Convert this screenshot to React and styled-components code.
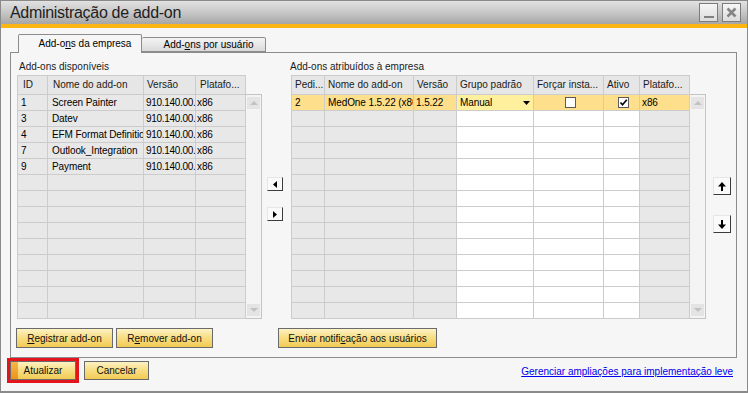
import React from 'react'
import styled, { createGlobalStyle } from 'styled-components'

const GlobalStyle = createGlobalStyle`
  html, body { margin: 0; padding: 0; background: #ffffff; }
  body {
    font-family: "Liberation Sans", Arial, sans-serif;
    font-size: 10px;
    color: #000;
  }
  * { box-sizing: border-box; }
`

const Window = styled.div`
  width: 748px;
  height: 393px;
  display: flex;
  flex-direction: column;
  background: #f6f6f6;
  border: 1px solid #8a8a8a;
  border-bottom-width: 2px;
  overflow: hidden;
`

const TitleBar = styled.div`
  height: 23px;
  flex: none;
  display: flex;
  align-items: center;
  padding: 0 6px 0 9px;
  background: linear-gradient(#e2e2e2, #c4c4c4 55%, #a6a6a6);
`

const Title = styled.div`
  flex: 1;
  font-size: 16px;
  letter-spacing: -0.3px;
  color: #1e1e1e;
  padding-top: 1px;
`

const WinButton = styled.div`
  width: 19px;
  height: 19px;
  margin-left: 4px;
  border: 1px solid #7c7c7c;
  background: linear-gradient(#f6f6f6, #dcdcdc);
  display: flex;
  align-items: ${(p) => (p.$bottom ? 'flex-end' : 'center')};
  justify-content: center;
  padding-bottom: ${(p) => (p.$bottom ? '3px' : '0')};
`

const MinBar = styled.div`
  width: 10px;
  height: 2px;
  background: #808080;
`

const Accent = styled.div`
  height: 4px;
  flex: none;
  background: #fbb614;
`

const Content = styled.div`
  padding: 6px 10px 0 9px;
  flex: none;
`

const TabRow = styled.div`
  height: 18px;
  display: flex;
  align-items: flex-end;
  padding-left: 8px;
`

const Tab = styled.div`
  width: 124px;
  height: ${(p) => (p.$active ? '19px' : '15px')};
  margin-bottom: ${(p) => (p.$active ? '-1px' : '0')};
  position: relative;
  z-index: ${(p) => (p.$active ? 1 : 0)};
  border: 1px solid #8c8c8c;
  border-bottom: ${(p) => (p.$active ? 'none' : '1px solid #8c8c8c')};
  border-left: ${(p) => (p.$active ? '1px solid #8c8c8c' : 'none')};
  border-radius: 2px 2px 0 0;
  background: ${(p) => (p.$active ? '#f6f6f6' : 'linear-gradient(#f4f4f4, #dadada)')};
  display: flex;
  align-items: center;
  justify-content: center;
  padding: 0 0 ${(p) => (p.$active ? '1px' : '0')} 10px;
`

const Panel = styled.div`
  height: 306px;
  border: 1px solid #8c8c8c;
  display: flex;
  flex-direction: column;
  padding-left: 6px;
`

const MainRow = styled.div`
  display: flex;
  margin-top: 7px;
`

const Section = styled.div`
  display: flex;
  flex-direction: column;
  margin-left: ${(p) => p.$ml || 0}px;
`

const SectionLabel = styled.div`
  height: 13px;
  line-height: 13px;
  margin: 0 0 2px ${(p) => p.$ml ?? 2}px;
  color: #1a1a1a;
`

const TableWrap = styled.div`
  display: flex;
  align-items: flex-start;
  margin-left: ${(p) => p.$ml || 0}px;
`

const Grid = styled.div`
  display: grid;
  grid-template-columns: ${(p) => p.$cols};
  grid-template-rows: 18px;
  grid-auto-rows: 15px;
  gap: 1px;
  background: #cccccc;
  border: 1px solid #cccccc;
`

const HeadCell = styled.div`
  background: #e6e6e6;
  line-height: 18px;
  padding: 0 ${(p) => p.$pad ?? 4}px;
  white-space: nowrap;
  overflow: hidden;
  color: #1a1a1a;
`

const tones = {
  gray: '#e8e8e8',
  white: '#ffffff',
  sel: '#fddf8c',
  selLight: '#fff09e',
}

const Cell = styled.div`
  background: ${(p) => tones[p.$tone]};
  line-height: 15px;
  padding: 0 0 0 ${(p) => p.$pl ?? 3}px;
  letter-spacing: ${(p) => p.$ls ?? -0.1}px;
  white-space: nowrap;
  overflow: hidden;
  display: flex;
  align-items: center;
  justify-content: ${(p) => (p.$center ? 'center' : 'flex-start')};
`

const ComboText = styled.span`
  flex: 1;
`

const ComboArrow = styled.span`
  display: flex;
  margin-right: 3px;
`

const CheckBox = styled.div`
  width: 11px;
  height: 11px;
  background: #fff;
  border: 1px solid #5a5a5a;
  display: flex;
  align-items: center;
  justify-content: center;
`

const ScrollBar = styled.div`
  width: 16px;
  height: 225px;
  margin-top: 19px;
  border: 1px solid #c4c4c4;
  border-left: none;
  background: #f4f4f4;
  display: flex;
  flex-direction: column;
  justify-content: space-between;
  padding: 2px 1px 2px 1px;
`

const ScrollArrow = styled.div`
  width: 13px;
  height: 12px;
  background: #e4e4e4;
  display: flex;
  align-items: center;
  justify-content: center;
`

const MoveCol = styled.div`
  display: flex;
  flex-direction: column;
  gap: ${(p) => p.$gap}px;
  margin: ${(p) => p.$top}px 0 0 ${(p) => p.$ml}px;
`

const MoveButton = styled.div`
  width: ${(p) => p.$w}px;
  height: ${(p) => p.$h}px;
  background: #fafafa;
  border: 1px solid;
  border-color: #e6e6e6 #3c3c3c #3c3c3c #e6e6e6;
  display: flex;
  align-items: center;
  justify-content: center;
`

const ButtonRow = styled.div`
  display: flex;
  margin: 9px 0 0 -1px;
`

const Button = styled.div`
  height: 20px;
  width: ${(p) => p.$w}px;
  margin-left: ${(p) => p.$ml || 0}px;
  border: 1px solid #6a6a6a;
  background: linear-gradient(#fdf2c4, #f8df86 45%, #f2cb55);
  display: flex;
  align-items: center;
  justify-content: center;
  color: #111;
  position: relative;
  overflow: hidden;
`

const Marker = styled.span`
  position: absolute;
  left: 0;
  top: 0;
  bottom: 0;
  width: 7px;
  background: linear-gradient(#f7b648, #ee9418);
`

const Footer = styled.div`
  display: flex;
  align-items: flex-start;
  padding: 0 14px 0 6px;
`

const Focus = styled.div`
  border: 3px solid #e3141b;
`

const FooterButton = styled(Button)`
  height: 19px;
  margin-top: ${(p) => p.$mt || 0}px;
`

const Link = styled.a`
  margin: 8px 0 0 auto;
  color: #0000ee;
  text-decoration: underline;
  line-height: 12px;
  cursor: pointer;
`

const U = styled.span`
  text-decoration: underline;
`

const leftCols = '29px 95px 51px 49px'
const rightCols = '32px 88px 42px 76px 69px 35px 49px'

const available = [
  ['1', 'Screen Painter'],
  ['3', 'Datev'],
  ['4', 'EFM Format Definition'],
  ['7', 'Outlook_Integration'],
  ['9', 'Payment'],
]

const ROWS = 14

function Tri({ dir, color = '#000', w = 4, h = 7 }) {
  const paths = {
    left: `M${w} 0 L0 ${h / 2} L${w} ${h}Z`,
    right: `M0 0 L${w} ${h / 2} L0 ${h}Z`,
    up: `M0 ${h} L${w / 2} 0 L${w} ${h}Z`,
    down: `M0 0 L${w / 2} ${h} L${w} 0Z`,
  }
  return (
    <svg width={w} height={h} viewBox={`0 0 ${w} ${h}`}>
      <path d={paths[dir]} fill={color} />
    </svg>
  )
}

function Arrow({ up }) {
  return (
    <svg width="8" height="9" viewBox="0 0 8 9" style={{ transform: up ? 'none' : 'rotate(180deg)' }}>
      <path d="M4 0 L8 4.5 H5 V9 H3 V4.5 H0 Z" fill="#000" />
    </svg>
  )
}

function Scroll() {
  return (
    <ScrollBar>
      <ScrollArrow>
        <Tri dir="up" color="#c2c2c2" w={8} h={4} />
      </ScrollArrow>
      <ScrollArrow>
        <Tri dir="down" color="#c2c2c2" w={8} h={4} />
      </ScrollArrow>
    </ScrollBar>
  )
}

function LeftTable() {
  const cells = []
  for (let r = 0; r < ROWS; r++) {
    const row = available[r]
    cells.push(<Cell key={r + 'a'} $tone="gray">{row ? row[0] : ''}</Cell>)
    cells.push(<Cell key={r + 'b'} $tone="gray" $pl={4}>{row ? row[1] : ''}</Cell>)
    cells.push(<Cell key={r + 'c'} $tone="gray" $pl={2} $ls={-0.3}>{row ? '910.140.00.' : ''}</Cell>)
    cells.push(<Cell key={r + 'd'} $tone="gray" $pl={1}>{row ? 'x86' : ''}</Cell>)
  }
  return (
    <TableWrap>
      <Grid $cols={leftCols}>
        <HeadCell $pad={5}>ID</HeadCell>
        <HeadCell $pad={5}>Nome do add-on</HeadCell>
        <HeadCell $pad={3}>Versão</HeadCell>
        <HeadCell $pad={4}>Platafo...</HeadCell>
        {cells}
      </Grid>
      <Scroll />
    </TableWrap>
  )
}

function RightTable() {
  const cells = []
  for (let r = 0; r < ROWS; r++) {
    const first = r === 0
    const g = first ? 'sel' : 'gray'
    const w = first ? 'sel' : 'white'
    cells.push(<Cell key={r + 'a'} $tone={g}>{first ? '2' : ''}</Cell>)
    cells.push(<Cell key={r + 'b'} $tone={g}>{first ? 'MedOne 1.5.22 (x86)' : ''}</Cell>)
    cells.push(<Cell key={r + 'c'} $tone={g} $pl={2}>{first ? '1.5.22' : ''}</Cell>)
    cells.push(
      <Cell key={r + 'd'} $tone={first ? 'selLight' : 'white'}>
        {first && (
          <>
            <ComboText>Manual</ComboText>
            <ComboArrow>
              <Tri dir="down" w={7} h={4} />
            </ComboArrow>
          </>
        )}
      </Cell>
    )
    cells.push(
      <Cell key={r + 'e'} $tone={w} $center>
        {first && <CheckBox />}
      </Cell>
    )
    cells.push(
      <Cell key={r + 'f'} $tone={w} $center>
        {first && (
          <CheckBox>
            <svg width="9" height="9" viewBox="0 0 9 9">
              <path d="M1.5 4.5 L3.5 6.8 L7.8 1.8" stroke="#000" strokeWidth="1.6" fill="none" />
            </svg>
          </CheckBox>
        )}
      </Cell>
    )
    cells.push(<Cell key={r + 'g'} $tone={g} $pl={2}>{first ? 'x86' : ''}</Cell>)
  }
  return (
    <TableWrap $ml={1}>
      <Grid $cols={rightCols}>
        <HeadCell $pad={3}>Pedi...</HeadCell>
        <HeadCell $pad={3}>Nome do add-on</HeadCell>
        <HeadCell $pad={3}>Versão</HeadCell>
        <HeadCell $pad={3}>Grupo padrão</HeadCell>
        <HeadCell $pad={3}>Forçar insta...</HeadCell>
        <HeadCell $pad={3}>Ativo</HeadCell>
        <HeadCell $pad={3}>Platafo...</HeadCell>
        {cells}
      </Grid>
      <Scroll />
    </TableWrap>
  )
}

export default function App() {
  return (
    <>
      <GlobalStyle />
      <Window>
        <TitleBar>
          <Title>Administração de add-on</Title>
          <WinButton $bottom>
            <MinBar />
          </WinButton>
          <WinButton>
            <svg width="11" height="11" viewBox="0 0 11 11">
              <path d="M1.5 1.5 L9.5 9.5 M9.5 1.5 L1.5 9.5" stroke="#858585" strokeWidth="2.6" />
            </svg>
          </WinButton>
        </TitleBar>
        <Accent />
        <Content>
          <TabRow>
            <Tab $active>
              <span>Add-o<U>n</U>s da empresa</span>
            </Tab>
            <Tab>
              <span>Add-<U>o</U>ns por usuário</span>
            </Tab>
          </TabRow>
          <Panel>
            <MainRow>
              <Section>
                <SectionLabel>Add-ons disponíveis</SectionLabel>
                <LeftTable />
              </Section>
              <MoveCol $top={117} $gap={16} $ml={5}>
                <MoveButton $w={16} $h={14}>
                  <Tri dir="left" />
                </MoveButton>
                <MoveButton $w={16} $h={14}>
                  <Tri dir="right" />
                </MoveButton>
              </MoveCol>
              <Section $ml={7}>
                <SectionLabel $ml={0}>Add-ons atribuídos à empresa</SectionLabel>
                <RightTable />
              </Section>
              <MoveCol $top={117} $gap={20} $ml={7}>
                <MoveButton $w={18} $h={18}>
                  <Arrow up />
                </MoveButton>
                <MoveButton $w={18} $h={18}>
                  <Arrow />
                </MoveButton>
              </MoveCol>
            </MainRow>
            <ButtonRow>
              <Button $w={97}>
                <span><U>R</U>egistrar add-on</span>
              </Button>
              <Button $w={97} $ml={3}>
                <span>R<U>e</U>mover add-on</span>
              </Button>
              <Button $w={159} $ml={65}>
                <span>Enviar notifi<U>c</U>ação aos usuários</span>
              </Button>
            </ButtonRow>
          </Panel>
        </Content>
        <Footer>
          <Focus>
            <FooterButton $w={66}>
              <Marker />
              <span>Atualizar</span>
            </FooterButton>
          </Focus>
          <FooterButton $w={65} $ml={5} $mt={3}>
            <span>Cancelar</span>
          </FooterButton>
          <Link>Gerenciar ampliações para implementação leve</Link>
        </Footer>
      </Window>
    </>
  )
}
